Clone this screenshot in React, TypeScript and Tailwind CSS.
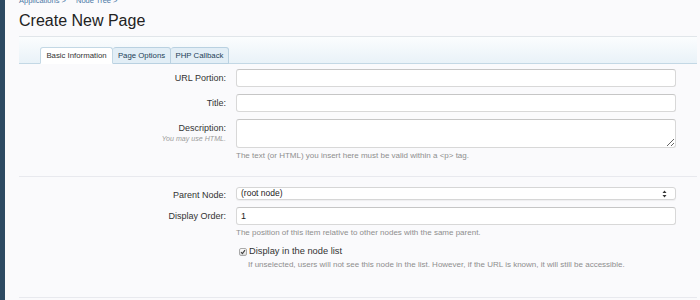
import React from 'react';

const FONT = { fontFamily: '"Liberation Sans", Arial, sans-serif' };

function Row({ label, children, extra }: { label: string; children: React.ReactNode; extra?: React.ReactNode }) {
    return (
        <div className="flex">
            <div className="w-[207px] shrink-0 text-right">
                <div className="text-[9px] leading-[18px] text-[#333]">{label}</div>
                {extra}
            </div>
            <div className="ml-[10px] mr-[21px] flex-1">{children}</div>
        </div>
    );
}

const inputCls =
    'block w-full h-[18px] rounded-[3px] border border-[#d8d8d8] border-t-[#c6c6c6] bg-white px-[4px] text-[9px] text-[#222] outline-none';

export default function App() {
    return (
        <div className="flex min-h-[300px] bg-[#fafafc] overflow-hidden" style={FONT}>
            {/* sidebar edge */}
            <div className="w-[5px] shrink-0 bg-[#2d4a62]" />

            <main className="flex-1 pl-[14px] pr-[3px]">
                {/* breadcrumb */}
                <div className="mt-[-4px] h-[10px] text-[7.5px] leading-[10px] text-[#4b79a6]">
                    Applications &gt; <span className="ml-[8px]">Node Tree &gt;</span>
                </div>

                <h1 className="mt-[5px] text-[16px] leading-[20px] text-[#222]">Create New Page</h1>

                {/* tabs */}
                <div className="mt-[5px] flex h-[28px] items-end border-t border-b border-t-[#e1e6ea] border-b-[#c3d8e5] bg-gradient-to-b from-[#fbfdfe] to-[#e9f2f8] pl-[21px]">
                    <div className="-mb-px flex h-[17px] w-[73px] items-center justify-center rounded-t-[3px] border border-[#c3d8e5] border-b-white bg-white text-[7.8px] text-[#333]">
                        Basic Information
                    </div>
                    <div className="-mb-px flex h-[17px] w-[58px] items-center justify-center rounded-t-[3px] border border-l-0 border-[#b9d1e1] bg-[#e2eef6] text-[7.8px] text-[#233f57]">
                        Page Options
                    </div>
                    <div className="-mb-px flex h-[17px] w-[58px] items-center justify-center rounded-t-[3px] border border-l-0 border-[#b9d1e1] bg-[#e2eef6] text-[7.8px] text-[#233f57]">
                        PHP Callback
                    </div>
                </div>

                {/* basic fields */}
                <div className="mt-[5px] flex flex-col gap-[7px]">
                    <Row label="URL Portion:">
                        <input readOnly className={inputCls} />
                    </Row>
                    <Row label="Title:">
                        <input readOnly className={inputCls} />
                    </Row>
                    <Row
                        label="Description:"
                        extra={<div className="mt-[-3px] text-[7.1px] italic leading-[10px] text-[#9a9a9a]">You may use HTML.</div>}
                    >
                        <textarea
                            readOnly
                            className="block h-[29px] w-full resize-y rounded-[3px] border border-[#d8d8d8] border-t-[#c6c6c6] bg-white px-[4px] text-[9px] outline-none"
                        />
                        <p className="mt-[3px] text-[8px] leading-[10px] text-[#8e8e8e]">
                            The text (or HTML) you insert here must be valid within a &lt;p&gt; tag.
                        </p>
                    </Row>
                </div>

                <div className="mt-[15px] border-t border-[#e8e9ee]" />

                {/* node settings */}
                <div className="mt-[9px] flex flex-col">
                    <Row label="Parent Node:">
                        <div className="mt-[1px] flex h-[13px] items-center justify-between rounded-[3px] border border-[#d6d6d6] bg-white pl-[4px] pr-[8px] shadow-[0_1px_1px_rgba(0,0,0,0.05)]">
                            <span className="text-[8.5px] text-[#222]">(root node)</span>
                            <svg width="5" height="8" viewBox="0 0 5 8">
                                <path d="M2.5 0.5 L4.5 3 L0.5 3 Z" fill="#333" />
                                <path d="M2.5 7.5 L4.5 5 L0.5 5 Z" fill="#333" />
                            </svg>
                        </div>
                    </Row>
                    <div className="mt-[3px]">
                        <Row label="Display Order:">
                            <input readOnly value="1" className={inputCls + ' h-[17px]'} />
                            <p className="mt-[3px] text-[8px] leading-[10px] text-[#8e8e8e]">
                                The position of this item relative to other nodes with the same parent.
                            </p>
                        </Row>
                    </div>
                    <div className="flex">
                        <div className="w-[207px] shrink-0" />
                        <div className="ml-[10px] mr-[21px] flex-1">
                            <div className="mt-[7px] flex h-[14px] items-center pl-[3px]">
                                <span className="flex h-[8px] w-[8px] items-center justify-center rounded-[2px] border border-[#a9a9a9] bg-gradient-to-b from-[#fdfdfd] to-[#dcdcdc]">
                                    <svg width="6" height="6" viewBox="0 0 6 6">
                                        <path d="M1 3.2 L2.4 4.6 L5 1.2" stroke="#444" strokeWidth="1.2" fill="none" />
                                    </svg>
                                </span>
                                <span className="ml-[2px] text-[9.3px] text-[#333]">Display in the node list</span>
                            </div>
                            <p className="mt-[1px] pl-[12px] text-[8px] leading-[10px] text-[#8e8e8e]">
                                If unselected, users will not see this node in the list. However, if the URL is known, it will still be accessible.
                            </p>
                        </div>
                    </div>
                </div>

                <div className="mt-[27px] border-t border-[#e8e9ee]" />
            </main>
        </div>
    );
}
